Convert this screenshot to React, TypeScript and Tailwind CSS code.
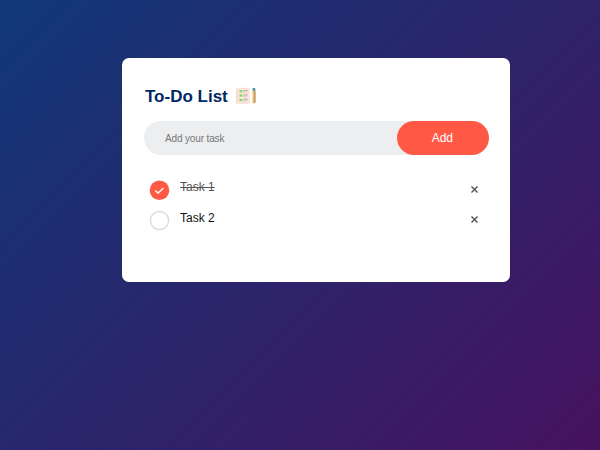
import { useState } from "react";

type Task = { id: number; label: string; done: boolean };

const initialTasks: Task[] = [
  { id: 1, label: "Task 1", done: true },
  { id: 2, label: "Task 2", done: false },
];

function NotepadIcon() {
  return (
    <svg className="ml-[7px] h-[18px] w-[22px]" viewBox="0 0 22 18" fill="none">
      <path d="M2 1.2 14.5.6 15 15.5 13.5 17 1 16.7.8 3Z" fill="#fce3d8" />
      <path d="M2.2 1.5 1.8 16.5" stroke="#f6cfc1" strokeWidth=".8" />
      <path d="M4.5 4.2h2.7M4.5 8.6h2.7M4.5 13h2.7" stroke="#6fdc60" strokeWidth="2" />
      <path d="M8 3.6h5M8 8h5M8 12.4h5" stroke="#a9aaa5" strokeWidth=".8" />
      <path d="M8 5.2h3.5M8 9.6h3.5M8 14h3.5" stroke="#b4d6a8" strokeWidth=".8" />
      <path d="M17.5 3.5h2.8v11.8l-1.4 1.7-1.4-1.7Z" fill="#f0b970" />
      <path d="M20 3.5v12" stroke="#9b7650" strokeWidth=".8" />
      <path d="M17.5 1.2h2.8v2.4h-2.8Z" fill="#3d86a4" />
    </svg>
  );
}

function TaskMark({ done }: { done: boolean }) {
  return (
    <svg className="mt-px size-5 shrink-0 overflow-visible" viewBox="0 0 20 20" fill="none">
      {done ? (
        <>
          <circle cx="9.5" cy="10.2" r="9.8" fill="#ff5945" />
          <path d="m5.2 10.4 2.8 2.6 5.6-5.1" stroke="#fff" strokeWidth="1.4" />
        </>
      ) : (
        <circle cx="9.5" cy="10.5" r="9.1" stroke="#dcdcdc" strokeWidth="1.5" />
      )}
    </svg>
  );
}

export default function App() {
  const [tasks, setTasks] = useState(initialTasks);
  const [draft, setDraft] = useState("");

  const addTask = () => {
    if (!draft.trim()) return;
    setTasks([...tasks, { id: Date.now(), label: draft, done: false }]);
    setDraft("");
  };
  const toggle = (id: number) =>
    setTasks(tasks.map((t) => (t.id === id ? { ...t, done: !t.done } : t)));

  return (
    <main className="h-[450px] w-full bg-[linear-gradient(135deg,#103878_0%,#46125f_100%)] pt-[58px] pl-[122px] font-['Liberation_Sans',Arial,sans-serif]">
      <section className="h-[223.5px] w-[388px] rounded-[7px] bg-white pt-7 pr-[21px] pl-[22px]">
        <h1 className="flex h-5 items-center pl-px text-[17px] font-bold text-[#002765]">
          <span className="pt-px">To-Do List</span>
          <NotepadIcon />
        </h1>
        <div className="mt-[14.5px] flex h-[34.5px] rounded-full bg-[#edeef0]">
          <input
            className="min-w-0 flex-1 bg-transparent pt-px pl-[21px] text-[10px] tracking-[-0.14px] outline-none placeholder:text-[#777777]"
            placeholder="Add your task"
            value={draft}
            onChange={(e) => setDraft(e.target.value)}
          />
          <button className="w-[92.5px] rounded-full bg-[#ff5945] pr-px text-[12px] tracking-[-0.2px] text-white" onClick={addTask}>
            Add
          </button>
        </div>
        <ul className="mt-6 pl-[5.5px]">
          {tasks.map((task) => (
            <li key={task.id} className="flex h-[30.25px] cursor-pointer" onClick={() => toggle(task.id)}>
              <TaskMark done={task.done} />
              <span
                className={
                  task.done
                    ? "ml-[10.5px] flex-1 pt-[0.35px] text-[12px] leading-4 text-[#555555] line-through"
                    : "ml-[10.5px] flex-1 pt-[0.35px] text-[12px] leading-4 text-[#111111]"
                }
              >
                {task.label}
              </span>
              <button
                aria-label="Delete task"
                className="mt-[6.5px] mr-[11.5px] h-[7px] w-[7px]"
                onClick={(e) => {
                  e.stopPropagation();
                  setTasks(tasks.filter((t) => t.id !== task.id));
                }}
              >
                <svg viewBox="0 0 7 7" className="size-[7px]" fill="none">
                  <path d="m.5.5 6 6m0-6-6 6" stroke="#505050" strokeWidth="1.4" />
                </svg>
              </button>
            </li>
          ))}
        </ul>
      </section>
    </main>
  );
}
